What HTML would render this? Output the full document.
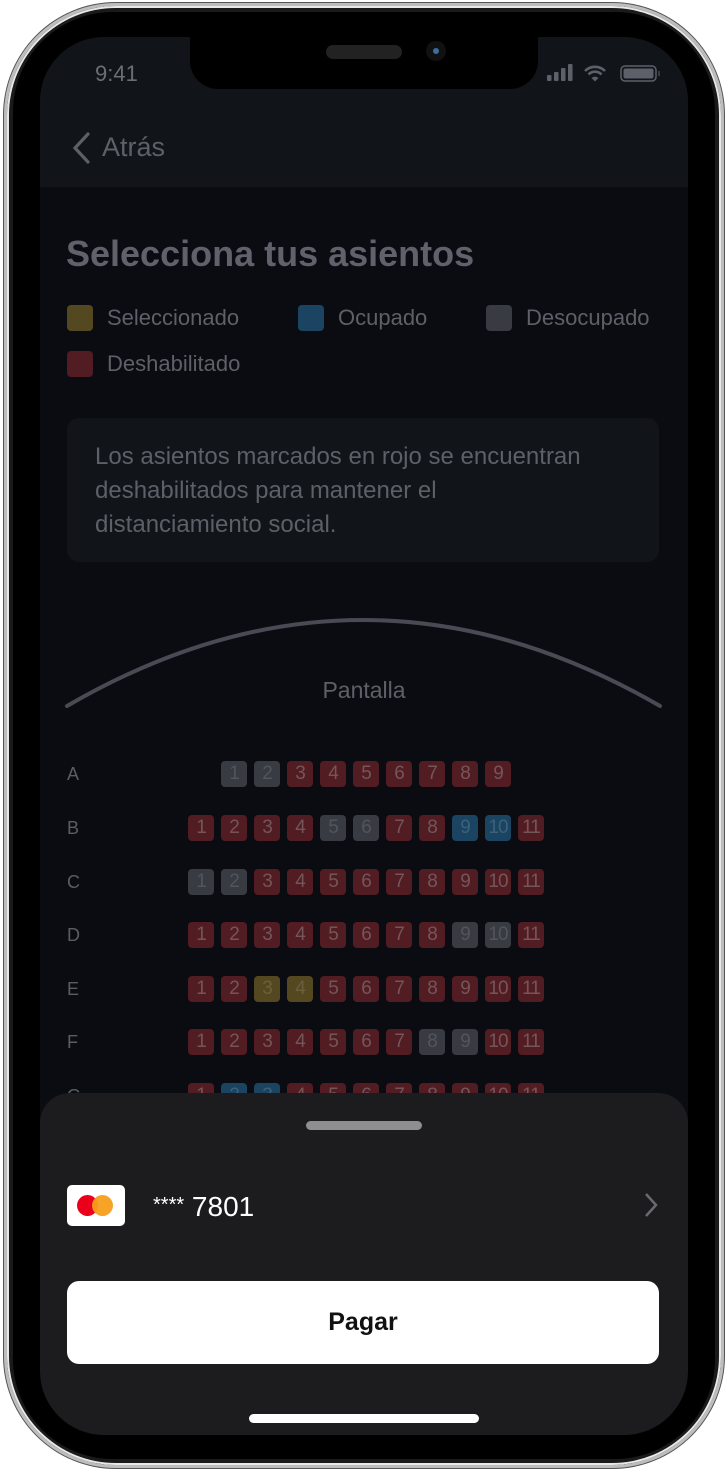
<!DOCTYPE html>
<html><head><meta charset="utf-8"><style>
*{margin:0;padding:0;box-sizing:border-box}
body{width:728px;height:1471px;background:#fff;position:relative;overflow:hidden;font-family:"Liberation Sans",sans-serif}
.frame{position:absolute;left:4px;top:3px;width:720px;height:1465px;border-radius:112px;background:#1a1a1a;border:3px solid #bdbdbd;box-shadow:inset 0 0 0 2px #e8e8e8,0 0 0 1px #555}
.bezel{position:absolute;left:13px;top:12px;width:702px;height:1447px;border-radius:100px;background:#000}
.screen{position:absolute;left:40px;top:37px;width:648px;height:1398px;border-radius:64px;background:#0a0c11;overflow:hidden}
.hdr{position:absolute;left:0;top:0;width:648px;height:150px;background:#111419}
.notch{position:absolute;left:150px;top:-2px;width:348px;height:54px;background:#000;border-radius:0 0 28px 28px}
.abs{position:absolute}
.t{color:#5d6068}
.sq{position:absolute;width:26px;height:26px;border-radius:4px}
.row{position:absolute;left:148px;display:flex;gap:7px}
.s{width:26px;height:26px;border-radius:4px;background:#521c23;color:#74565a;font-size:19px;line-height:26px;text-align:center;letter-spacing:-1px}
.g{background:#383b42;color:#52555b}.b{background:#1a4462;color:#3d617b}.y{background:#53481f;color:#6a603c}
.lbl{position:absolute;left:27px;font-size:18px;color:#5a5d64}
.sheet{position:absolute;left:0;top:1056px;width:648px;height:342px;background:#1c1c1e;border-radius:30px 30px 0 0}
</style></head><body>
<div class="frame"></div>
<div class="bezel"></div>
<div class="screen">
<div class="hdr"></div>
<div class="notch"><div class="abs" style="left:136px;top:10px;width:76px;height:14px;border-radius:7px;background:#222"></div><div class="abs" style="left:236px;top:6px;width:20px;height:20px;border-radius:50%;background:#111"><div class="abs" style="left:7px;top:7px;width:6px;height:6px;border-radius:50%;background:#3a6ea0"></div></div></div>
<div class="abs" style="left:55px;top:24px;font-size:22px;color:#6b6e75">9:41</div>
<svg class="abs" style="left:505px;top:26px" width="130" height="22"><g fill="#5d6068"><rect x="2" y="12" width="4.5" height="6" rx="1"/><rect x="9" y="9" width="4.5" height="9" rx="1"/><rect x="16" y="5" width="4.5" height="13" rx="1"/><rect x="23" y="1" width="4.5" height="17" rx="1"/></g><path d="M40 8a14 14 0 0 1 20 0M43.5 11.5a9 9 0 0 1 13 0" stroke="#5d6068" stroke-width="2.6" fill="none"/><path d="M46.5 15l3.5 3.5 3.5-3.5a5 5 0 0 0-7 0z" fill="#5d6068"/><rect x="76" y="3" width="35" height="15" rx="4" fill="none" stroke="#5d6068" stroke-width="1.5"/><rect x="78.5" y="5.5" width="30" height="10" rx="2" fill="#5d6068"/><rect x="113" y="8" width="2" height="5" fill="#3a3c42"/></svg>
<svg class="abs" style="left:30px;top:94px" width="24" height="34"><path d="M18 3L5 17l13 14" stroke="#5d6068" stroke-width="3.2" fill="none" stroke-linecap="round"/></svg>
<div class="abs" style="left:62px;top:95px;font-size:27px;color:#5d6068">Atrás</div>
<div class="abs" style="left:26px;top:196px;font-size:36px;font-weight:bold;color:#5f626a">Selecciona tus asientos</div>
<div class="sq" style="left:27px;top:268px;background:#53481f"></div><div class="abs t" style="left:67px;top:268px;font-size:22px">Seleccionado</div>
<div class="sq" style="left:258px;top:268px;background:#1a4462"></div><div class="abs t" style="left:298px;top:268px;font-size:22px">Ocupado</div>
<div class="sq" style="left:446px;top:268px;background:#383b42"></div><div class="abs t" style="left:486px;top:268px;font-size:22px">Desocupado</div>
<div class="sq" style="left:27px;top:314px;background:#521c23"></div><div class="abs t" style="left:67px;top:314px;font-size:22px">Deshabilitado</div>
<div class="abs" style="left:27px;top:381px;width:592px;height:144px;border-radius:12px;background:#111419;padding:22px 28px;font-size:24px;line-height:34px;color:#5d6068">Los asientos marcados en rojo se encuentran<br>deshabilitados para mantener el<br>distanciamiento social.</div>
<svg class="abs" style="left:0;top:570px" width="648" height="140"><path d="M27 99Q323 -73 620 99" stroke="#484b53" stroke-width="4" fill="none" stroke-linecap="round"/></svg>
<div class="abs" style="left:0;width:648px;text-align:center;top:640px;font-size:23px;color:#5d6068">Pantalla</div>
<div class="lbl" style="top:727px">A</div><div class="lbl" style="top:781px">B</div><div class="lbl" style="top:835px">C</div><div class="lbl" style="top:888px">D</div><div class="lbl" style="top:942px">E</div><div class="lbl" style="top:995px">F</div><div class="lbl" style="top:1049px">G</div>
<div class="row" style="top:724px;left:181px"><div class="s g">1</div><div class="s g">2</div><div class="s">3</div><div class="s">4</div><div class="s">5</div><div class="s">6</div><div class="s">7</div><div class="s">8</div><div class="s">9</div></div>
<div class="row" style="top:778px"><div class="s">1</div><div class="s">2</div><div class="s">3</div><div class="s">4</div><div class="s g">5</div><div class="s g">6</div><div class="s">7</div><div class="s">8</div><div class="s b">9</div><div class="s b">10</div><div class="s">11</div></div>
<div class="row" style="top:832px"><div class="s g">1</div><div class="s g">2</div><div class="s">3</div><div class="s">4</div><div class="s">5</div><div class="s">6</div><div class="s">7</div><div class="s">8</div><div class="s">9</div><div class="s">10</div><div class="s">11</div></div>
<div class="row" style="top:885px"><div class="s">1</div><div class="s">2</div><div class="s">3</div><div class="s">4</div><div class="s">5</div><div class="s">6</div><div class="s">7</div><div class="s">8</div><div class="s g">9</div><div class="s g">10</div><div class="s">11</div></div>
<div class="row" style="top:939px"><div class="s">1</div><div class="s">2</div><div class="s y">3</div><div class="s y">4</div><div class="s">5</div><div class="s">6</div><div class="s">7</div><div class="s">8</div><div class="s">9</div><div class="s">10</div><div class="s">11</div></div>
<div class="row" style="top:992px"><div class="s">1</div><div class="s">2</div><div class="s">3</div><div class="s">4</div><div class="s">5</div><div class="s">6</div><div class="s">7</div><div class="s g">8</div><div class="s g">9</div><div class="s">10</div><div class="s">11</div></div>
<div class="row" style="top:1046px"><div class="s">1</div><div class="s b">2</div><div class="s b">3</div><div class="s">4</div><div class="s">5</div><div class="s">6</div><div class="s">7</div><div class="s">8</div><div class="s">9</div><div class="s">10</div><div class="s">11</div></div>
<div class="sheet">
<div class="abs" style="left:266px;top:28px;width:116px;height:9px;border-radius:5px;background:#8e8e8e"></div>
<div class="abs" style="left:27px;top:92px;width:58px;height:41px;border-radius:5px;background:#fff"><div class="abs" style="left:10px;top:10px;width:21px;height:21px;border-radius:50%;background:#eb001b"></div><div class="abs" style="left:25px;top:10px;width:21px;height:21px;border-radius:50%;background:#f79e1b;opacity:.95"></div></div>
<div class="abs" style="left:113px;top:98px;font-size:28px;color:#fff"><span style="font-size:20px;vertical-align:5px">****</span> 7801</div>
<svg class="abs" style="left:603px;top:98px" width="16" height="28"><path d="M3 3l10 11-10 11" stroke="#6a6a6e" stroke-width="2.5" fill="none"/></svg>
<div class="abs" style="left:27px;top:188px;width:592px;height:83px;border-radius:12px;background:#fff;text-align:center;line-height:83px;font-size:25px;font-weight:bold;color:#111">Pagar</div>
<div class="abs" style="left:209px;top:321px;width:230px;height:9px;border-radius:5px;background:#fff"></div>
</div>
</div>
</body></html>
